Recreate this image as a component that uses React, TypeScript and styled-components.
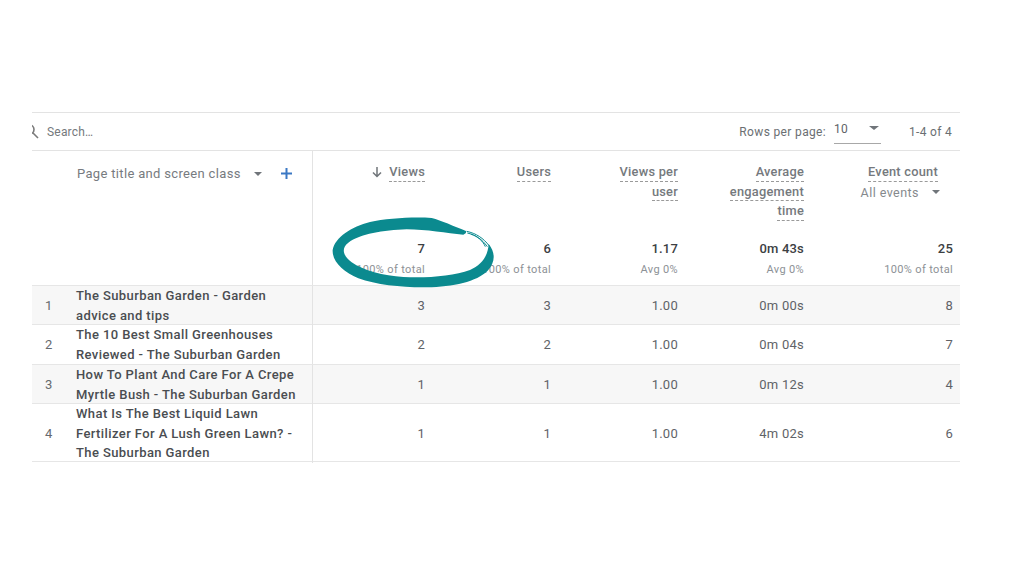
import styled, { createGlobalStyle } from 'styled-components';

const GlobalStyle = createGlobalStyle`
  html, body {
    margin: 0;
    background: #fff;
  }
  body {
    font-family: Roboto, "Liberation Sans", sans-serif;
    color: #5f6368;
  }
`;

const Page = styled.main`
  width: 1024px;
  height: 576px;
  padding: 112px 64px 0 32px;
  box-sizing: border-box;
  overflow: hidden;
`;

const Report = styled.section`
  position: relative;
  width: 928px;
`;

const Toolbar = styled.div`
  display: flex;
  align-items: center;
  height: 37px;
  border-top: 1px solid #e3e3e3;
  border-bottom: 1px solid #e3e3e3;
  overflow: hidden;
  font-size: 12px;
  letter-spacing: 0.3px;
  color: #75797d;
`;

const SearchIcon = styled.svg`
  width: 15px;
  height: 15px;
  margin: 0 8px 0 -8px;
  flex: none;
`;

const SearchText = styled.span`
  flex: 1;
  font-size: 12px;
  letter-spacing: 0.2px;
`;

const PerPageLabel = styled.span`
  margin-right: 8px;
  letter-spacing: 0.35px;
  color: #6b6f73;
`;

const PerPageSelect = styled.div`
  display: flex;
  justify-content: space-between;
  width: 47px;
  height: 23px;
  margin: 1px 28px 0 0;
  padding-top: 1px;
  box-sizing: border-box;
  border-bottom: 1px solid #a8a8a8;
  color: #5f6368;
  line-height: 14px;
`;

const Caret = styled.i<{ $gap?: number; $top?: number }>`
  display: inline-block;
  width: 0;
  height: 0;
  margin-left: ${({ $gap }) => $gap ?? 0}px;
  margin-top: ${({ $top }) => $top ?? 0}px;
  border-left: 4px solid transparent;
  border-right: 4px solid transparent;
  border-top: 4px solid #70757a;
`;

const SelectCaret = styled(Caret)`
  margin: 4px 2px 0 0;
  border-left-width: 5px;
  border-right-width: 5px;
`;

const PageCount = styled.span`
  margin-right: 8px;
  color: #6b6f73;
`;

const Row = styled.div<{ $shaded?: boolean; $height: number }>`
  display: grid;
  grid-template-columns: 281px 119px 126px 127px 126px 149px;
  height: ${({ $height }) => $height}px;
  box-sizing: border-box;
  border-bottom: 1px solid #e6e6e6;
  background: ${({ $shaded }) => ($shaded ? '#f7f7f7' : '#fff')};
`;

const DimensionHead = styled.div`
  display: flex;
  align-items: flex-start;
  padding: 15px 0 0 45px;
  box-sizing: border-box;
  border-right: 1px solid #e3e3e3;
  font-size: 13px;
  letter-spacing: 0.33px;
  color: #777b80;
`;

const PlusIcon = styled.svg`
  width: 13px;
  height: 13px;
  margin: 1px 0 0 18px;
`;

const MetricHead = styled.div`
  display: flex;
  flex-direction: column;
  justify-content: space-between;
  align-items: flex-end;
  padding: 13px 7px 8px 0;
  text-align: right;
`;

const Labels = styled.div<{ $inset?: number }>`
  display: flex;
  flex-direction: column;
  align-items: flex-end;
  gap: 2px;
  padding-right: ${({ $inset }) => $inset ?? 0}px;
`;

const Label = styled.span`
  display: flex;
  align-items: center;
  height: 16.5px;
  border-bottom: 1px dashed #9a9a9a;
  font-size: 12.8px;
  font-weight: 500;
  letter-spacing: 0.25px;
  line-height: 16px;
  color: #75797d;
`;

const SortedHead = styled.div`
  display: flex;
  align-items: flex-start;
  gap: 6px;
`;

const SortArrow = styled.svg`
  width: 12px;
  height: 12px;
  margin-top: 2px;
`;

const EventFilter = styled.div`
  display: flex;
  align-items: center;
  margin-top: 1px;
  margin-right: -2px;
  font-size: 12.5px;
  letter-spacing: 0.45px;
  color: #85898d;
`;

const Totals = styled.div`
  display: flex;
  flex-direction: column;
  gap: 7px;
`;

const TotalValue = styled.span`
  font-size: 13px;
  font-weight: 500;
  letter-spacing: 0.2px;
  line-height: 14px;
  color: #3c4043;
`;

const TotalNote = styled.span`
  font-size: 11px;
  letter-spacing: 0.35px;
  line-height: 14px;
  color: #8d9196;
`;

const TitleCell = styled.div`
  display: grid;
  grid-template-columns: 44px 226px;
  align-items: center;
  border-right: 1px solid #e3e3e3;
`;

const RowIndex = styled.span`
  padding-left: 13px;
  font-size: 13px;
  color: #666a6e;
`;

const PageTitle = styled.span`
  font-size: 13px;
  font-weight: 500;
  letter-spacing: 0.4px;
  line-height: 19.5px;
  color: #4a4d51;
`;

const ValueCell = styled.div`
  display: flex;
  align-items: center;
  justify-content: flex-end;
  padding-right: 7px;
  font-size: 13px;
  letter-spacing: 0.25px;
  color: #5f6368;
`;

const Brush = styled.svg`
  position: absolute;
  top: 38px;
  left: 288px;
  width: 260px;
  height: 150px;
  pointer-events: none;
`;

type Metric = {
  labels: string[];
  total: string;
  note: string;
};

const metrics: Metric[] = [
  { labels: ['Views'], total: '7', note: '100% of total' },
  { labels: ['Users'], total: '6', note: '100% of total' },
  { labels: ['Views per', 'user'], total: '1.17', note: 'Avg 0%' },
  { labels: ['Average', 'engagement', 'time'], total: '0m 43s', note: 'Avg 0%' },
  { labels: ['Event count'], total: '25', note: '100% of total' },
];

const rows = [
  { title: 'The Suburban Garden - Garden advice and tips', height: 39, values: ['3', '3', '1.00', '0m 00s', '8'] },
  { title: 'The 10 Best Small Greenhouses Reviewed - The Suburban Garden', height: 40, values: ['2', '2', '1.00', '0m 04s', '7'] },
  { title: 'How To Plant And Care For A Crepe Myrtle Bush - The Suburban Garden', height: 39, values: ['1', '1', '1.00', '0m 12s', '4'] },
  { title: 'What Is The Best Liquid Lawn Fertilizer For A Lush Green Lawn? - The Suburban Garden', height: 58, values: ['1', '1', '1.00', '4m 02s', '6'] },
];

function MetricHeader({ metric, index }: { metric: Metric; index: number }) {
  const labels = (
    <Labels $inset={index === 4 ? 15 : 0}>
      {metric.labels.map((l) => (
        <Label key={l}>{l}</Label>
      ))}
      {index === 4 && (
        <EventFilter>
          All events
          <Caret $gap={13} />
        </EventFilter>
      )}
    </Labels>
  );
  return (
    <MetricHead>
      {index === 0 ? (
        <SortedHead>
          <SortArrow viewBox="0 0 12 12" fill="none" stroke="#70757a" strokeWidth="1.5">
            <path d="M6 1v9.5M2 6.5l4 4 4-4" />
          </SortArrow>
          {labels}
        </SortedHead>
      ) : (
        labels
      )}
      <Totals>
        <TotalValue>{metric.total}</TotalValue>
        <TotalNote>{metric.note}</TotalNote>
      </Totals>
    </MetricHead>
  );
}

export default function App() {
  return (
    <Page>
      <GlobalStyle />
      <Report>
        <Toolbar>
          <SearchIcon viewBox="0 0 15 15" fill="none" stroke="#7a7a7a" strokeWidth="1.6">
            <circle cx="5.5" cy="5.5" r="4.5" />
            <path d="M9 9l5 5" />
          </SearchIcon>
          <SearchText>Search…</SearchText>
          <PerPageLabel>Rows per page:</PerPageLabel>
          <PerPageSelect>
            10
            <SelectCaret />
          </PerPageSelect>
          <PageCount>1-4 of 4</PageCount>
        </Toolbar>

        <Row $height={135}>
          <DimensionHead>
            Page title and screen class
            <Caret $gap={13} $top={6} />
            <PlusIcon viewBox="0 0 13 13" fill="none" stroke="#3b78c4" strokeWidth="2">
              <path d="M6.5 1v11M1 6.5h11" />
            </PlusIcon>
          </DimensionHead>
          {metrics.map((m, i) => (
            <MetricHeader key={m.labels[0]} metric={m} index={i} />
          ))}
        </Row>

        {rows.map((row, i) => (
          <Row key={row.title} $height={row.height} $shaded={i % 2 === 0}>
            <TitleCell>
              <RowIndex>{i + 1}</RowIndex>
              <PageTitle>{row.title}</PageTitle>
            </TitleCell>
            {row.values.map((v, j) => (
              <ValueCell key={j}>{v}</ValueCell>
            ))}
          </Row>
        ))}

        <Brush viewBox="0 0 780 450">
          <path
            fill="#0b8a8f"
            d="M438 243C400 228 365 212 335 204C280 200 200 205 150 216C95 230 45 262 38 300C36 335 70 365 115 385C170 405 250 413 320 412C400 410 470 395 503 362C525 338 528 310 506 282C504 318 485 345 450 360C400 378 320 385 250 381C190 377 130 362 95 337C70 318 62 295 85 278C120 252 190 240 260 238C320 238 380 250 430 254C436 252 440 248 438 243Z"
          />
          <path
            d="M440 244C468 250 490 264 508 288M442 249C468 255 486 268 502 290M452 252C474 260 488 272 496 290"
            fill="none"
            stroke="#0b8a8f"
            strokeWidth="3"
          />
        </Brush>
      </Report>
    </Page>
  );
}
